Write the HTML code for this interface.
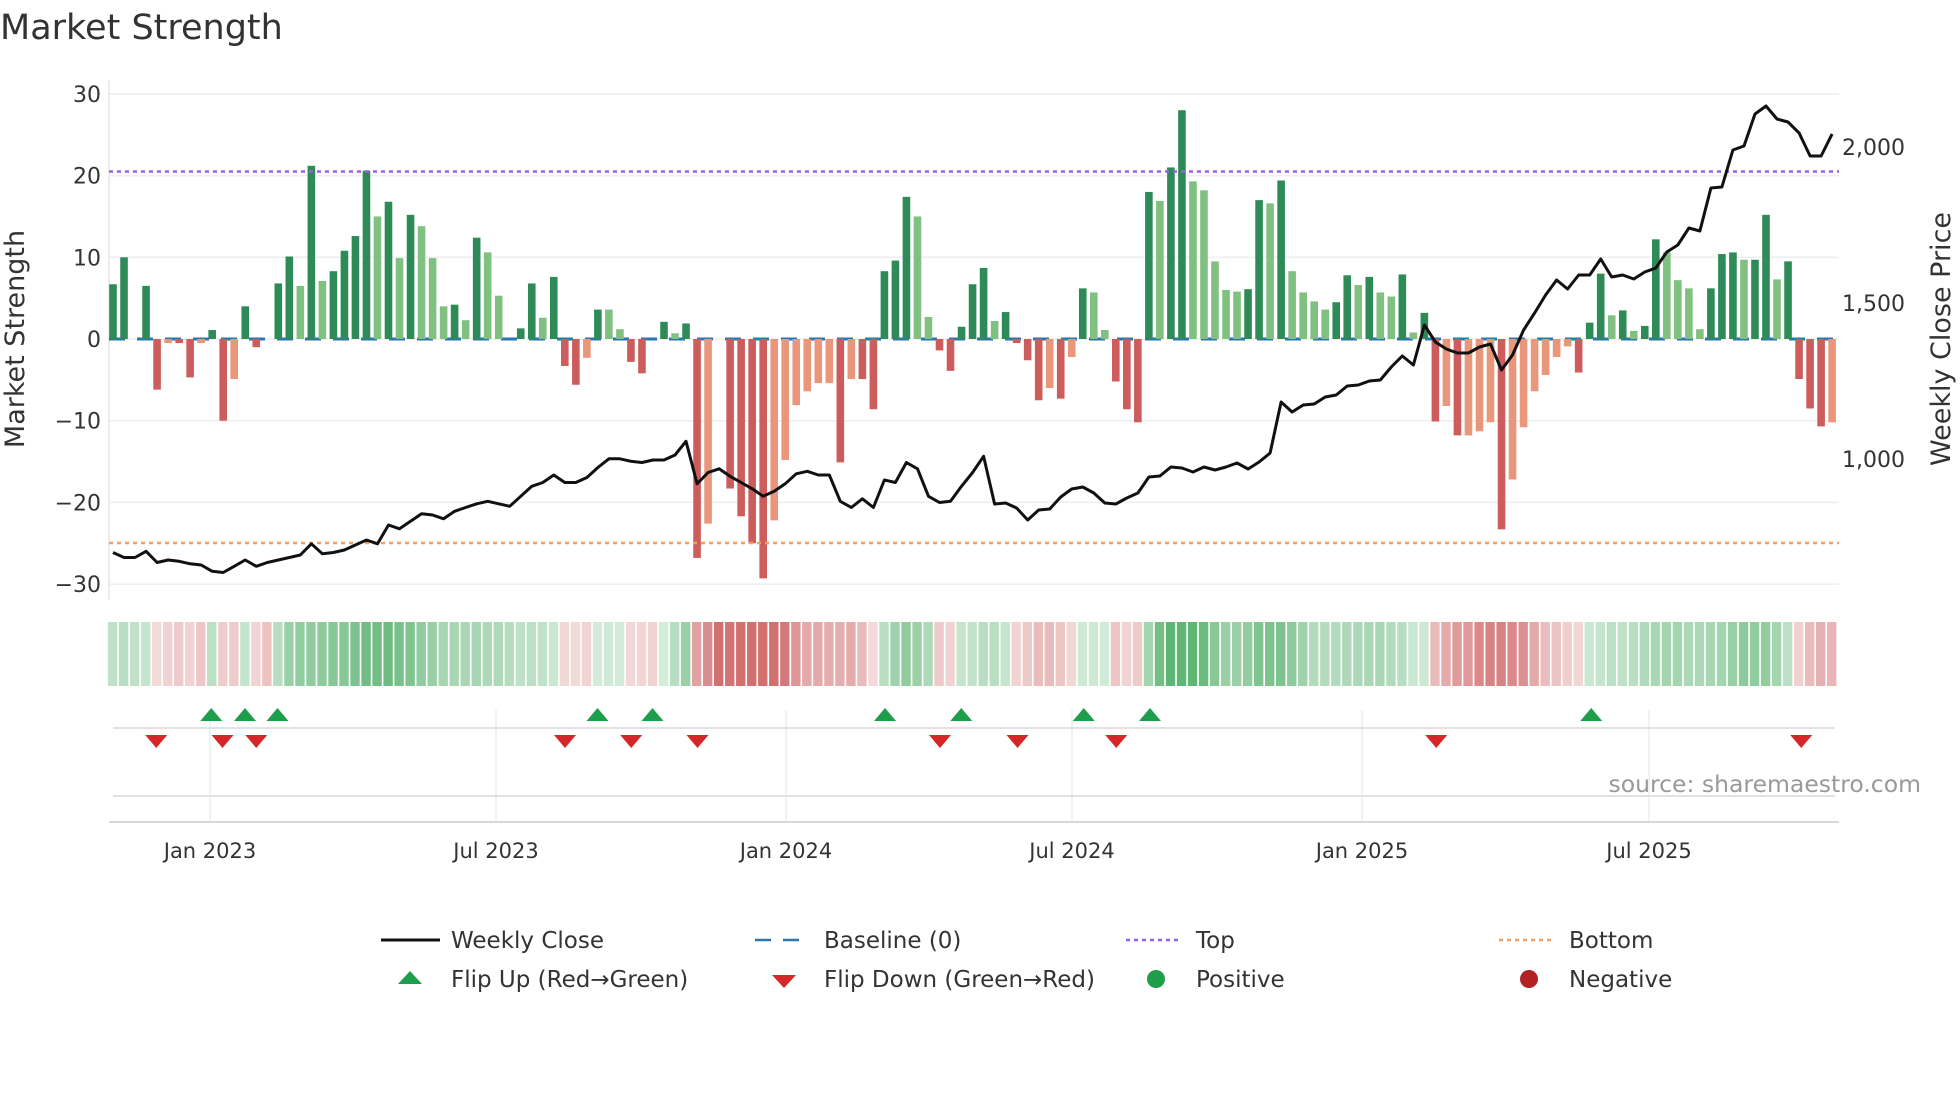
<!DOCTYPE html>
<html><head><meta charset="utf-8"><style>
html,body{margin:0;padding:0;background:#fff;width:1960px;height:1102px;overflow:hidden}
svg{display:block;font-family:"DejaVu Sans","Liberation Sans",sans-serif}
</style></head><body>
<svg id="s" width="1960" height="1102" viewBox="0 0 1960 1102" xmlns="http://www.w3.org/2000/svg">
<text x="0" y="39" font-size="35" fill="#333">Market Strength</text>
<g id="grid"></g>
<g id="bars"></g>
<g id="strip"></g>
<g id="flips"></g>
<text x="1921" y="792" font-size="23.5" fill="#999" text-anchor="end">source: sharemaestro.com</text>
<text transform="translate(24,339) rotate(-90)" font-size="27" fill="#333" text-anchor="middle">Market Strength</text>
<text transform="translate(1950,339) rotate(-90)" font-size="27" fill="#333" text-anchor="middle">Weekly Close Price</text>
<g font-size="23" fill="#333">
<line x1="381" y1="940" x2="440" y2="940" stroke="#111" stroke-width="3"/>
<text x="451" y="948">Weekly Close</text>
<line x1="755" y1="940" x2="806" y2="940" stroke="#2a76b0" stroke-width="2.5" stroke-dasharray="16,12"/>
<text x="824" y="948">Baseline (0)</text>
<line x1="1126" y1="940" x2="1181" y2="940" stroke="#9b5fe0" stroke-width="2.5" stroke-dasharray="4,4"/>
<text x="1196" y="948">Top</text>
<line x1="1499" y1="940" x2="1554" y2="940" stroke="#f0a060" stroke-width="2.5" stroke-dasharray="4,4"/>
<text x="1569" y="948">Bottom</text>
<polygon points="410,971 398,984 422,984" fill="#1e9e4a"/>
<text x="451" y="987">Flip Up (Red→Green)</text>
<polygon points="784,988 772,975 796,975" fill="#d62728"/>
<text x="824" y="987">Flip Down (Green→Red)</text>
<circle cx="1156" cy="979" r="9" fill="#1e9e4a"/>
<text x="1196" y="987">Positive</text>
<circle cx="1529" cy="979" r="9" fill="#b22222"/>
<text x="1569" y="987">Negative</text>
</g>
</svg>
<script>
var NS="http://www.w3.org/2000/svg";
function el(p,t,a){var e=document.createElementNS(NS,t);for(var k in a)e.setAttribute(k,a[k]);p.appendChild(e);return e;}
var V=[[6.7,'D'],[10,'D'],[0,'Z'],[6.5,'D'],[-6.2,'R'],[-0.5,'O'],[-0.5,'R'],[-4.7,'R'],[-0.5,'O'],[1.1,'D'],[-10,'R'],[-4.9,'O'],[4,'D'],[-1,'R'],[0,'Z'],[6.8,'D'],[10.1,'D'],[6.5,'L'],[21.2,'D'],[7.1,'L'],[8.3,'D'],[10.8,'D'],[12.6,'D'],[20.6,'D'],[15,'L'],[16.8,'D'],[9.9,'L'],[15.2,'D'],[13.8,'L'],[9.9,'L'],[4,'L'],[4.2,'D'],[2.3,'L'],[12.4,'D'],[10.6,'L'],[5.3,'L'],[0,'Z'],[1.3,'D'],[6.8,'D'],[2.6,'L'],[7.6,'D'],[-3.3,'R'],[-5.6,'R'],[-2.3,'O'],[3.6,'D'],[3.6,'L'],[1.2,'L'],[-2.8,'R'],[-4.2,'R'],[0,'Z'],[2.1,'D'],[0.7,'L'],[1.9,'D'],[-26.8,'R'],[-22.6,'O'],[0,'Z'],[-18.3,'R'],[-21.7,'R'],[-25,'R'],[-29.3,'R'],[-22.2,'O'],[-14.8,'O'],[-8.1,'O'],[-6.4,'O'],[-5.4,'O'],[-5.4,'O'],[-15.1,'R'],[-4.9,'O'],[-4.9,'R'],[-8.6,'R'],[8.3,'D'],[9.6,'D'],[17.4,'D'],[15,'L'],[2.7,'L'],[-1.4,'R'],[-3.9,'R'],[1.5,'D'],[6.7,'D'],
[8.7,'D'],[2.2,'L'],[3.3,'D'],[-0.5,'R'],[-2.6,'R'],[-7.5,'R'],[-6,'O'],[-7.3,'R'],[-2.2,'O'],[6.2,'D'],[5.7,'L'],[1.1,'L'],[-5.2,'R'],[-8.6,'R'],[-10.2,'R'],[18,'D'],[16.9,'L'],[21,'D'],[28,'D'],[19.3,'L'],[18.2,'L'],[9.5,'L'],[6,'L'],[5.8,'L'],[6.1,'D'],[17,'D'],[16.6,'L'],[19.4,'D'],[8.3,'L'],[5.7,'L'],[4.6,'L'],[3.6,'L'],[4.5,'D'],[7.8,'D'],[6.6,'L'],[7.6,'D'],[5.7,'L'],[5.2,'L'],[7.9,'D'],[0.8,'L'],[3.2,'D'],[-10.1,'R'],[-8.2,'O'],[-11.8,'R'],[-11.8,'O'],[-11.3,'O'],[-10.2,'O'],[-23.3,'R'],[-17.2,'O'],[-10.8,'O'],[-6.4,'O'],[-4.4,'O'],[-2.2,'O'],[-0.9,'O'],[-4.1,'R'],[2,'D'],[8,'D'],[2.9,'L'],[3.5,'D'],[1,'L'],[1.6,'D'],[12.2,'D'],[10.6,'L'],[7.2,'L'],[6.2,'L'],[1.2,'L'],[6.2,'D'],[10.4,'D'],[10.6,'D'],[9.7,'L'],[9.7,'D'],[15.2,'D'],[7.3,'L'],[9.5,'D'],[-4.9,'R'],[-8.5,'R'],[-10.7,'R'],[-10.2,'O']];
var PL=[442,446,446,441,450,448,449,451,452,457,458,453,448,453,450,448,446,444,435,443,442,440,436,432,435,420,423,417,411,412,415,409,406,403,401,403,405,397,389,386,380,386,386,382,374,367,367,369,370,368,368,364,353,387,378,375,381,386,391,397,393,387,379,377,380,380,401,406,399,406,384,386,370,375,397,402,401,389,378,365];
var P=PL.map(function(v){return v*1.25;});
P=P.concat([504,503,508,520,510,509,497,489,487,493,503,504,498,493,477,476,467,468,472,467,470,467,463,469,462,453,402,412,405,404,397,395,386,385,381,380,367,356,365,325,342,349,353,353,347,344,370,355,330,313,295,280,289,275,275,259,277,275,279,272,268,252,245,228,231,188,187,150,146,114,106,119,122,133,156,156,134]);
var g=document.getElementById('grid'),b=document.getElementById('bars'),st=document.getElementById('strip'),fl=document.getElementById('flips');
var Y0=339,K=8.17,X0=113,DX=11.02,L=109,R=1839;
for(var t=-30;t<=30;t+=10){var y=Y0-t*K;el(g,'line',{x1:L,x2:R,y1:y,y2:y,stroke:'#eeeeee','stroke-width':1.5});
 var tx=el(g,'text',{x:101,y:y+8,'font-size':22,fill:'#333','text-anchor':'end'});tx.textContent=(t<0?'\u2212'+(-t):t);}
el(g,'line',{x1:L,x2:L,y1:80,y2:600,stroke:'#e6e6e6','stroke-width':1.5});
[[2000,147],[1500,303],[1000,459]].forEach(function(a){var tx=el(g,'text',{x:1842,y:a[1]+8,'font-size':22,fill:'#333'});tx.textContent=a[0].toLocaleString('en-US');});
el(b,'line',{x1:L,x2:R,y1:Y0,y2:Y0,stroke:'#2a76b0','stroke-width':3,'stroke-dasharray':'16,12'});
var C={D:'#2e8b57',L:'#80c080',R:'#cd5c5c',O:'#e9967a',Z:'#fff'};
V.forEach(function(v,i){var cx=X0+DX*i,h=v[0]*K;if(v[1]!='Z'&&h!=0){var y=h>0?Y0-h:Y0;el(b,'rect',{x:cx-3.8,y:y,width:7.6,height:Math.abs(h),fill:C[v[1]]});}});
el(b,'line',{x1:L,x2:R,y1:171.5,y2:171.5,stroke:'#9b5fe0','stroke-width':2.5,'stroke-dasharray':'4,4'});
el(b,'line',{x1:L,x2:R,y1:543,y2:543,stroke:'#f0a060','stroke-width':2.5,'stroke-dasharray':'4,4'});
var d='';P.forEach(function(y,i){d+=(i?'L':'M')+(X0+DX*i).toFixed(1)+','+y.toFixed(1);});
el(b,'path',{d:d,fill:'none',stroke:'#111','stroke-width':3,'stroke-linejoin':'round'});
var last=1;
V.forEach(function(v,i){var val=v[0];var sg=val>0?1:val<0?-1:last;last=sg;
 var m=0;for(var j=Math.max(0,i-2);j<=Math.min(V.length-1,i+2);j++)m+=V[j][0];m=Math.abs(m/5);
 var a=(0.22+Math.min(m/18,1)*0.6).toFixed(2);
 var col=sg>0?'rgba(60,165,85,'+a+')':'rgba(200,80,80,'+a+')';
 el(st,'rect',{x:X0+DX*i-5.1,y:622,width:9.4,height:64,fill:col});});
var ticks=[[210,'Jan 2023'],[496,'Jul 2023'],[786,'Jan 2024'],[1072,'Jul 2024'],[1362,'Jan 2025'],[1649,'Jul 2025']];
ticks.forEach(function(t){el(fl,'line',{x1:t[0],x2:t[0],y1:710,y2:822,stroke:'#eeeeee','stroke-width':1.5});
 var tx=el(fl,'text',{x:t[0],y:858,'font-size':21,fill:'#333','text-anchor':'middle'});tx.textContent=t[1];});
el(fl,'line',{x1:113,x2:1835,y1:728,y2:728,stroke:'#d8d8d8','stroke-width':1.5});
el(fl,'line',{x1:113,x2:1835,y1:796,y2:796,stroke:'#d8d8d8','stroke-width':1.5});
el(fl,'line',{x1:109,x2:1839,y1:822,y2:822,stroke:'#cccccc','stroke-width':1.5});
[169,196,222,478,522,708,769,867,920,1273].forEach(function(x){x*=1.25;el(fl,'polygon',{points:(x)+',708 '+(x-11)+',721 '+(x+11)+',721',fill:'#1e9e4a'});});
[125,178,205,452,505,558,752,814,893,1149,1441].forEach(function(x){x*=1.25;el(fl,'polygon',{points:(x)+',748 '+(x-11)+',735 '+(x+11)+',735',fill:'#d62728'});});
</script>
</body></html>
